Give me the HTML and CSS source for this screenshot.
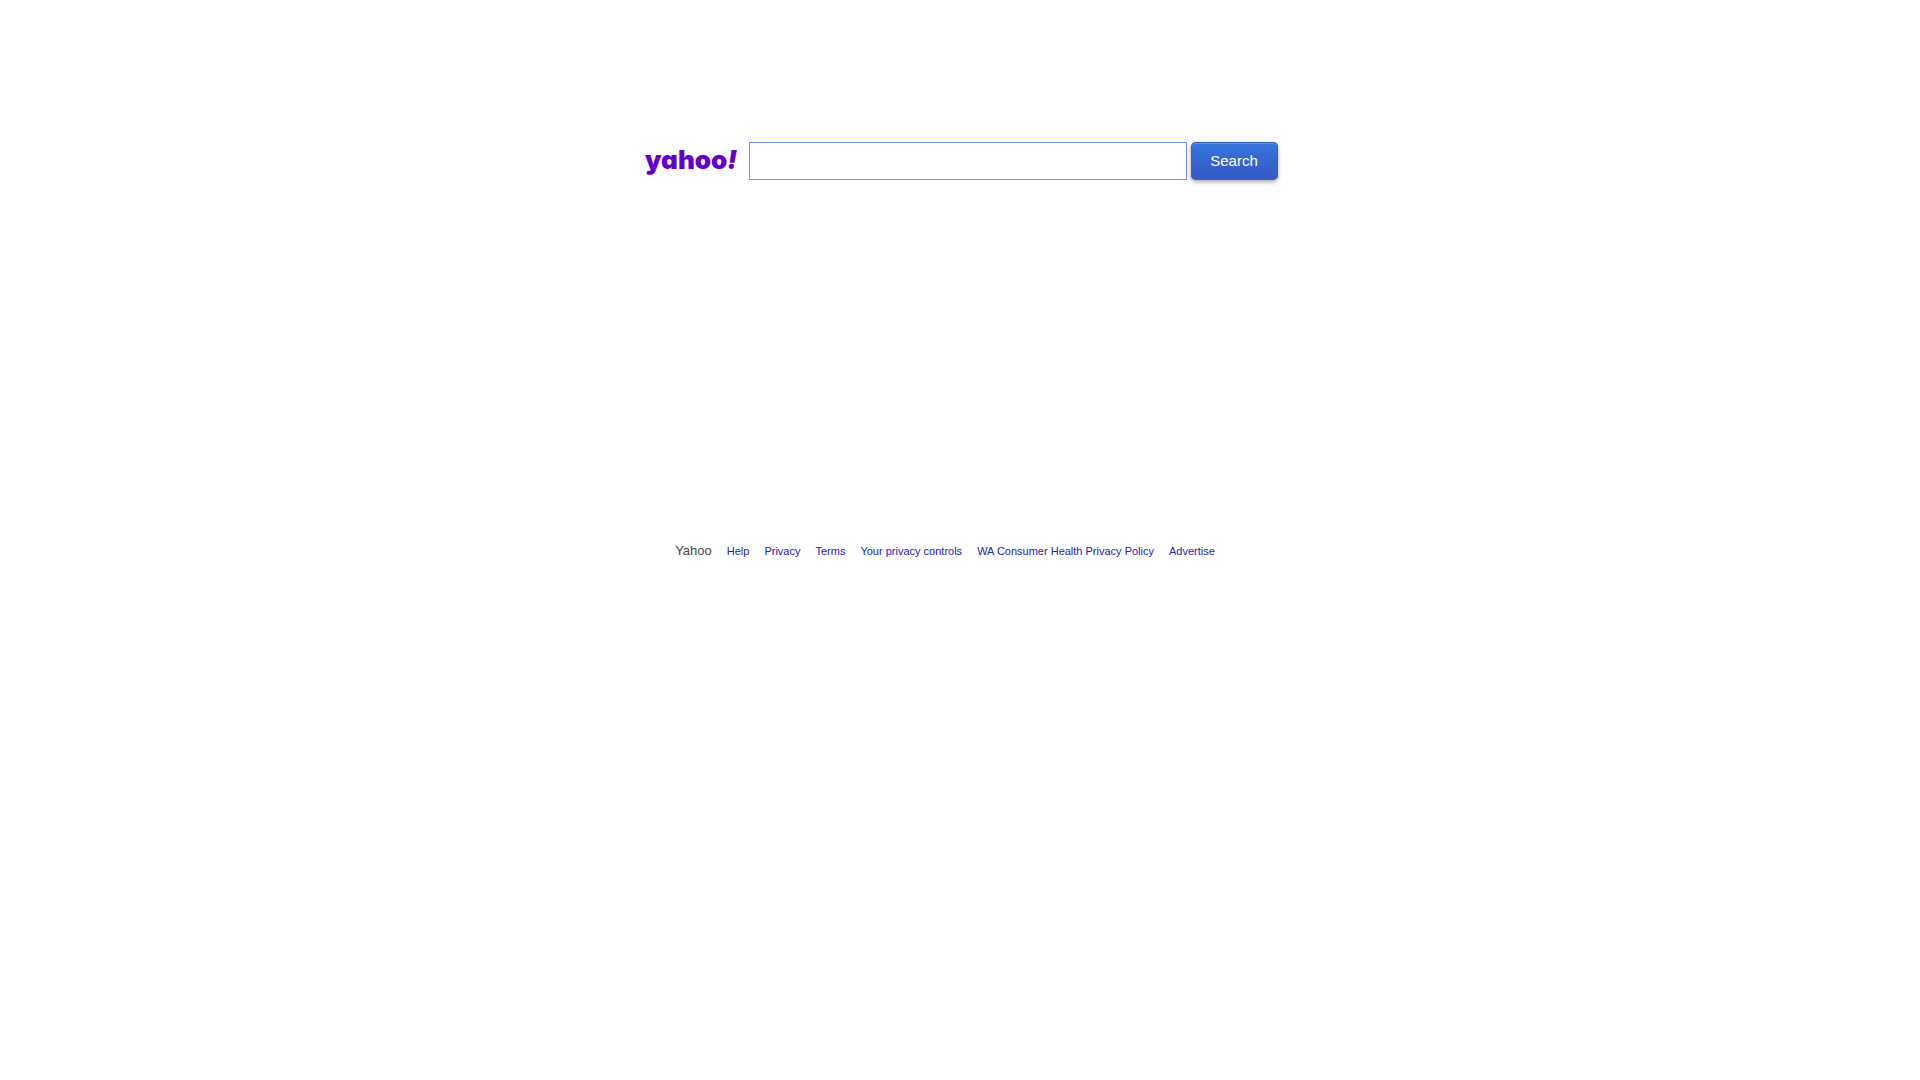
FILE: index.html
```
<!DOCTYPE html>
<html lang="en">
<head>
	<meta charset="utf-8">
	<meta name="viewport" content="width=device-width, initial-scale=1">
	<title>Yahoo Search</title>
	<link rel="stylesheet" href="styles.css">
</head>

<body>

	<main>
		<form class="search" action="#" role="search">
			<a class="logo" href="#" aria-label="Yahoo">yahoo<span class="bang">!</span></a>
			<input class="query" type="text" name="p" aria-label="Search the web" autocomplete="off">
			<button class="submit" type="submit">Search</button>
		</form>
	</main>

	<footer class="footer">
		<span class="brand">Yahoo</span>
		<a href="#">Help</a>
		<a href="#">Privacy</a>
		<a href="#">Terms</a>
		<a href="#">Your privacy controls</a>
		<a href="#">WA Consumer Health Privacy Policy</a>
		<a href="#">Advertise</a>
	</footer>

</body>
</html>
```
FILE: styles.css
```
body {
	margin: 0;
	background: #fff;
	font-family: Arial, "Liberation Sans", Helvetica, sans-serif;
	font-size: 13px;
}

a {
	color: #2222aa;
	text-decoration: none;
}

/* ----------- search ----------- */
.search {
	display: flex;
	align-items: center;
	justify-content: center;
	padding: 142px 0 0 3px;
}

.search .logo {
	width: 104px;
	padding-bottom: 2px;
	color: #6001d2;
	font-family: Inter, "Liberation Sans", sans-serif;
	font-size: 26px;
	font-weight: 900;
	font-feature-settings: "cv11";
	line-height: 34px;
	white-space: nowrap;
}

.bang {
	font-style: italic;
}

.query {
	box-sizing: border-box;
	flex: 0 1 438px;
	min-width: 0;
	height: 38px;
	padding: 0 8px;
	border: 1px solid #7590f3;
	outline: 0;
	font: 18px Arial, "Liberation Sans", sans-serif;
}

.submit {
	width: 87px;
	height: 38px;
	margin-left: 4px;
	padding: 0 1px 2px 0;
	border: 0;
	border-radius: 5px;
	background: linear-gradient(#3775dd, #3558c4);
	box-shadow: inset 0 0 0 1px #3463c8, inset 0 2px 1px #5a93e8, 0 2px 4px rgba(0, 0, 0, 0.35);
	color: #fff;
	font: 15px Arial, "Liberation Sans", sans-serif;
}

/* ----------- footer ----------- */
.footer {
	display: flex;
	flex-wrap: wrap;
	align-items: baseline;
	justify-content: center;
	gap: 15px;
	margin-top: 363px;
	padding-right: 30px;
	font-size: 11px;
}

.brand {
	color: #444;
	font-size: 13px;
}
```
